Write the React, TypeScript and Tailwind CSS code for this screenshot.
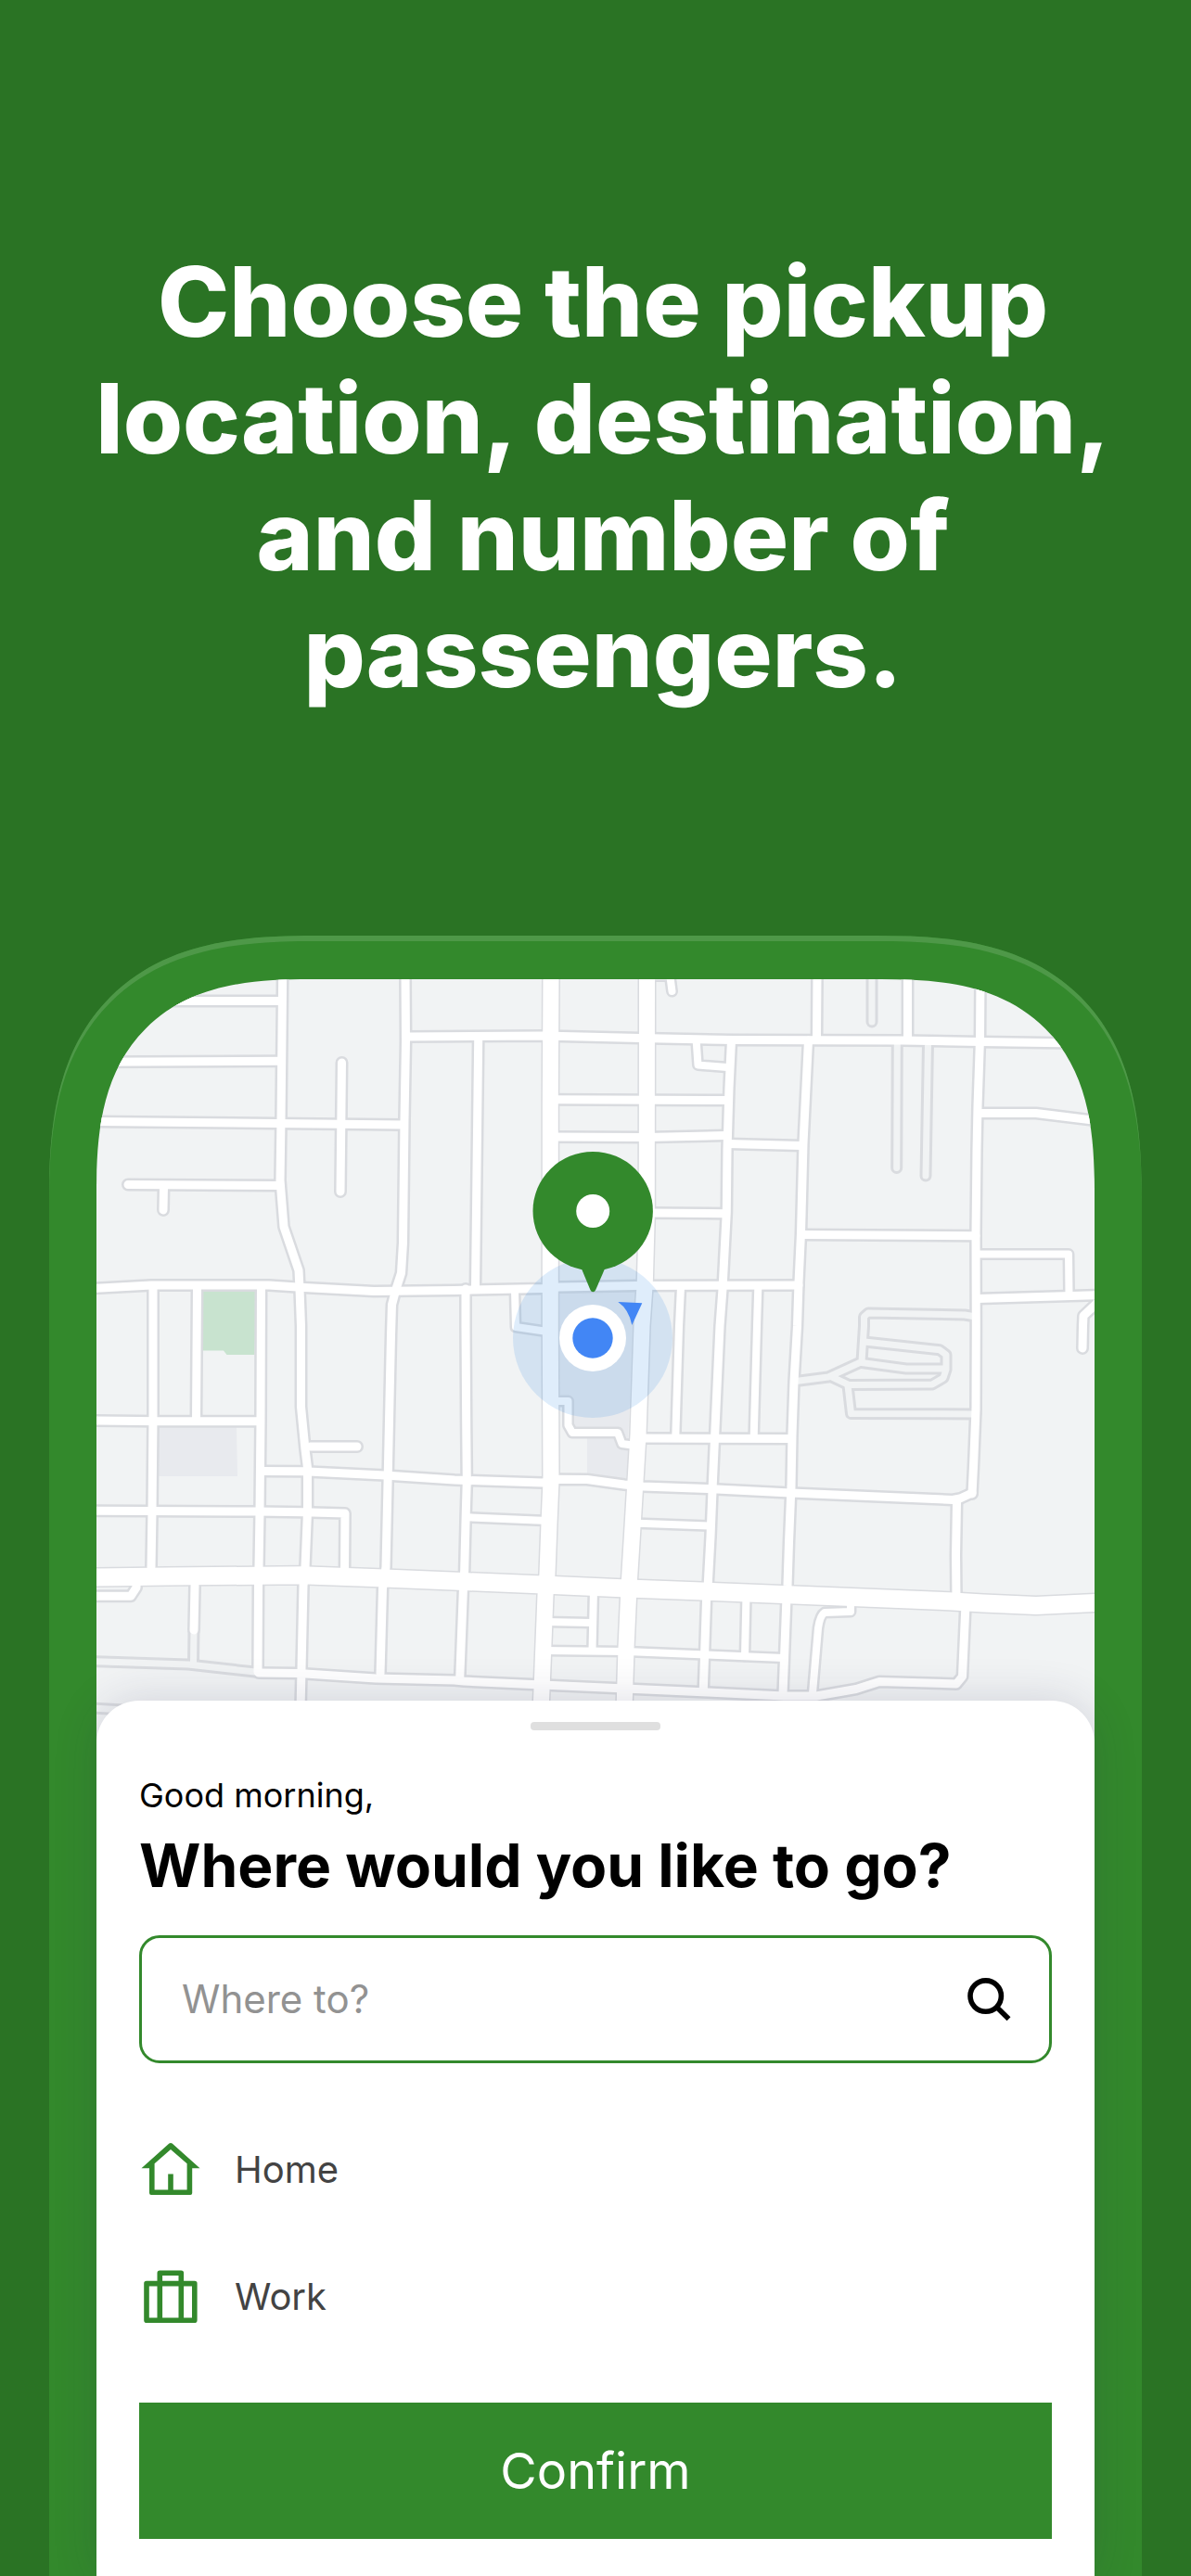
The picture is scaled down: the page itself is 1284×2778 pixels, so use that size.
const STREETS = [
  "M304.7 1050 L303 1207 L302 1273 L306 1323 L322 1370 L323 1390 L324.5 1430 L324.5 1517 L329 1563 L331.5 1583 L331.5 1630 L329 1690 L327 1710 L325 1800 L324 1845",
  "M100 1079.5 H303",
  "M100 1145.3 L303 1144.3",
  "M100 1209.5 L297 1211.5 L435 1213",
  "M138 1277.5 L302 1278.5",
  "M176.5 1280 L176 1305",
  "M368.5 1146 L367 1285",
  "M437 1050 L437.5 1123 L436 1207 L434.5 1340 L432.5 1373 L427 1390 L422.5 1407 L421.5 1440 L418.3 1587 L416 1690 L412.5 1713 L410 1805",
  "M440 1118 L585 1117 L690 1119.5 L790 1121.5 L973 1122 L1057 1123.5 L1190 1125.5",
  "M100 1389.5 L163 1386 L290 1386 L328 1388.5 L403 1392.5 L490 1391.5 L585 1389.5 L603 1388 L686 1386.5 L861 1386",
  "M165 1388 V1530 L164 1630 L163 1690",
  "M212.5 1388 L211.5 1532",
  "M281.5 1388 L281 1530 L280 1630 L279 1690 L278.5 1710 L278 1803",
  "M100 1532 L170 1532.7 H280",
  "M283 1586.5 L327 1586.7 L415 1591 L490 1596 L585 1599 L603 1595.3 L633 1595.5 L673 1601 L693 1603 L763 1605.5 L847 1609.7 L1027 1617.5 L1035 1616 L1048 1610",
  "M335 1560 H385",
  "M100 1629.3 L276 1630 L327 1630.7 L372 1632 L371.5 1695",
  "M100 1721.3 H141 L147 1712 V1704",
  "M210 1710 L209 1758",
  "M279 1804 L322 1804.5 L405 1810 L490 1812 L500 1813 L573 1816.5 L663 1820.5 L763 1825 L845 1829 L880 1829 L923 1821.5 L948 1813.5 L1031 1816 L1037.5 1808 L1041 1730",
  "M502 1390 V1430 L502.7 1537 L503.3 1597 L502.3 1630 L500.7 1693 L499.3 1717 L495.7 1810",
  "M515.7 1120 L512.5 1388",
  "M593 1185.7 L783 1186.5",
  "M593 1226 L697 1226.5 L782 1224.5",
  "M788.5 1122 L786 1173 L784 1240 L783.3 1307 L779 1390 L776 1430 L770.7 1547 L768.3 1600 L766 1657 L763.3 1707 L761.5 1727 L758.3 1822",
  "M697 1052 H720",
  "M700 1308 L782 1308.7",
  "M785 1233.5 L864 1235.5",
  "M871.5 1122 L866 1233 L863.5 1330 L861 1383 L859.5 1430 L856 1490 L854 1547 L853 1603 L850.5 1663 L849 1710 L847.7 1730 L844 1828",
  "M881 1050 L880.5 1120",
  "M978.5 1050 V1120",
  "M1057 1050 L1056.5 1120 L1054 1193 L1053 1240 L1052 1330 L1052.3 1430 L1052 1520 L1049.7 1577 L1048 1611",
  "M1031.5 1620 L1030.5 1677 L1031 1725",
  "M1055 1200.5 H1117 L1190 1209.5",
  "M864 1331.5 L1052 1332.7",
  "M1054 1400.5 L1190 1396.5",
  "M1184 1404 L1168 1419 L1167.5 1430 L1167 1454",
  "M692 1551 L853 1551.5",
];

const LANES = [
  "M555 1392 L556 1431 L590 1436",
  "M750.7 1123 L752.5 1148.5 L784 1151",
  "M722 1050 L724.5 1069",
  "M1053 1352.5 H1152 L1152.5 1397",
  "M734 1388 L732 1430 L728.3 1549",
  "M817.3 1388 L816 1430 L812.7 1549",
  "M503 1636.3 L590 1640",
  "M681 1642.5 L765 1645.5",
  "M598 1511 H612.5 V1537 L617 1545 H666 L670.5 1557 L682 1558.5",
  "M640 1715 L638.5 1779",
  "M588 1749 L638 1750",
  "M585 1780 L675 1781 L755 1784.3 L845 1788",
  "M804.5 1720 L803 1786",
  "M917 1731 V1738 L889 1739 Q884 1742 882 1756 L876 1826",
];

const PRIVATE_ROADS = [
  "M940 1050 V1102",
  "M967.3 1125 L966.7 1259.5",
  "M1000.5 1125 L998 1268",
  "M1052 1420 L1040 1418 L936 1416 L931.5 1420 V1430 L929 1468.5 L893 1485 L858 1489.5",
  "M932 1447 L1013 1455.7 L1020 1461 V1477 L1017 1486 L1005 1493 L915 1493.5 L897 1485",
  "M929 1469.5 L977 1476 H1018",
  "M914 1494 L917.5 1524.5 L1052 1525",
  "M209 1758 L208.5 1792",
  "M100 1791.5 L203 1795 L275 1803",
  "M98 1842 L150 1845",
];

const AVENUES = [
  "M594 1050 L593.3 1190 V1430 L594 1597 L592 1643 L590 1697 L588 1720 L584.5 1810 L583 1845",
  "M697.5 1050 L697.3 1310 L695.3 1383 L692 1430 L688 1547 L685 1597 L681 1663 L678.5 1703 L677.5 1723 L675 1777 L673 1845",
];

const BOULEVARD =
  "M95 1701 L180 1700 L325 1698.8 L408 1701.7 L500 1705.5 L580 1708.7 L670 1712.7 L757 1716 L850 1719.7 L1023 1726.7 L1060 1729 L1117 1731.5 L1190 1728";

function Roads({ paths, className }: { paths: string[]; className: string }) {
  return (
    <g className={className}>
      {paths.map((d) => (
        <path key={d} d={d} />
      ))}
    </g>
  );
}

function CityMap() {
  return (
    <svg
      viewBox="104 1056 1076 824"
      className="block w-full"
      fill="none"
      strokeLinejoin="round"
      strokeLinecap="round"
      role="img"
      aria-label="Map with the pickup location"
    >
      <rect x="90" y="1040" width="1110" height="860" fill="#f1f3f4" />
      <path d="M218 1392H276L274.5 1461H244.5L241 1456.5H218Z" fill="#c8e3cf" />
      <path d="M171 1539H255L256 1592H171Z" fill="#e8eaee" />
      <path d="M600 1390H690L682 1430L677 1556L617 1545V1508L600 1507Z" fill="#e8eaee" />
      <path d="M633 1550H670L680 1560L674 1600L633 1592Z" fill="#e8eaee" />

      <Roads paths={STREETS} className="stroke-[#d9dbdf] [stroke-width:14px]" />
      <Roads paths={LANES} className="stroke-[#d9dbdf] [stroke-width:13px]" />
      <Roads paths={PRIVATE_ROADS} className="stroke-[#d9dbdf] [stroke-width:13px]" />
      <Roads paths={AVENUES} className="stroke-[#d9dbdf] [stroke-width:20px]" />
      <Roads paths={[BOULEVARD]} className="stroke-[#d9dbdf] [stroke-width:22px]" />
      <Roads paths={PRIVATE_ROADS} className="stroke-[#f1f3f4] [stroke-width:7px]" />
      <Roads paths={STREETS} className="stroke-white [stroke-width:9px]" />
      <Roads paths={LANES} className="stroke-white [stroke-width:8px]" />
      <Roads paths={AVENUES} className="stroke-white [stroke-width:17px]" />
      <Roads paths={[BOULEVARD]} className="stroke-white [stroke-width:19px]" />

      <circle cx="639" cy="1443" r="86" fill="#1a7fe2" fillOpacity="0.14" />
      <circle cx="639" cy="1443" r="36" fill="#fff" />
      <circle cx="639" cy="1443" r="21.7" fill="#4286f5" />
      <path d="M666.3 1404L692.3 1405.3L681.3 1429Q678 1412 666.3 1404Z" fill="#4286f5" />
      <ellipse cx="639.2" cy="1306" rx="64.7" ry="64" fill="#33892c" />
      <path d="M626 1366L636.4 1391Q637.4 1393.3 639.3 1393.3Q641.2 1393.3 642.2 1391L653 1366Z" fill="#33892c" />
      <circle cx="639.2" cy="1306" r="18" fill="#fff" />
    </svg>
  );
}

function SearchIcon() {
  return (
    <svg viewBox="0 0 48 48" className="size-12 shrink-0" fill="none" stroke="#000" aria-hidden="true">
      <circle cx="20.7" cy="20.6" r="16.7" strokeWidth="5.6" />
      <path d="M32 32L45.5 45.2" strokeWidth="5.6" />
    </svg>
  );
}

function HomeIcon() {
  return (
    <svg viewBox="0 0 64 60" className="h-15 w-16 shrink-0" fill="#33892c" aria-hidden="true">
      <path
        fillRule="evenodd"
        d="M30.4 1.6Q32 .4 33.6 1.6L63.5 28.3H55.2V55Q55.2 57 53.2 57H11Q9 57 9 55V28.3H.5ZM32 8L14.6 23.2V51.4H29.2V34.4H34.8V51.4H49.6V23.2Z"
      />
    </svg>
  );
}

function WorkIcon() {
  return (
    <svg viewBox="0 0 64 60" className="h-15 w-16 shrink-0" fill="none" stroke="#33892c" strokeWidth="5.6" strokeLinejoin="round" aria-hidden="true">
      <path d="M6 15.6H57.8V55.2H6ZM20.3 55.2V4.2H43.3V55.2" />
    </svg>
  );
}

export default function App() {
  return (
    <main className="flex min-h-screen flex-col overflow-hidden bg-[#2a7324] font-['Inter',sans-serif]">
      <h1 className="mx-auto h-[1009px] max-w-[1160px] pt-[262px] pl-4 text-center text-[104px] leading-[126px] font-extrabold text-white">
        Choose the pickup location, destination, and number of passengers.
      </h1>

      <div className="mx-[53px] flex flex-1 flex-col rounded-t-[220px] bg-[#33892c] px-[51px] pt-[47px] shadow-[inset_0_6px_0_#4e9848] [corner-shape:superellipse(1.4)] supports-[corner-shape:round]:rounded-t-[286px]">
        <div className="overflow-hidden rounded-t-[180px] [corner-shape:superellipse(1.4)] supports-[corner-shape:round]:rounded-t-[230px]">
          <CityMap />
        </div>

        <section className="relative -mt-[46px] flex flex-1 flex-col rounded-t-[46px] bg-white px-[46px] pt-[23px] pb-10 shadow-[0_0_48px_rgba(40,35,80,0.16)]">
          <div className="mx-auto h-[9px] w-[140px] rounded-[4px] bg-[#dfdfdf]" />
          <p className="mt-[46px] text-[36px] leading-[48px] text-black">Good morning,</p>
          <h2 className="mt-3 text-[64px] leading-[80px] font-bold text-black">Where would you like to go?</h2>

          <form className="mt-[35px]" onSubmit={(e) => e.preventDefault()}>
            <div className="flex h-[138px] items-center rounded-[22px] border-[3px] border-[#33892c] pr-[41px] pl-[43px]">
              <input
                type="text"
                aria-label="Where to?"
                placeholder="Where to?"
                className="min-w-0 flex-1 bg-transparent text-[42px] leading-[56px] text-black outline-none placeholder:text-[#929292]"
              />
              <button type="submit" aria-label="Search">
                <SearchIcon />
              </button>
            </div>

            <ul className="mt-[85px] flex flex-col gap-[77px]">
              <li>
                <button type="button" className="flex items-center gap-[37px] pl-0.5 text-[40px] leading-[60px] text-[#434343]">
                  <HomeIcon />
                  Home
                </button>
              </li>
              <li>
                <button type="button" className="flex items-center gap-[37px] pl-0.5 text-[40px] leading-[60px] text-[#434343]">
                  <WorkIcon />
                  Work
                </button>
              </li>
            </ul>

            <button type="submit" className="mt-[84px] block h-[147px] w-full bg-[#33892c] text-[54px] leading-[70px] text-white">
              Confirm
            </button>
          </form>
        </section>
      </div>
    </main>
  );
}
